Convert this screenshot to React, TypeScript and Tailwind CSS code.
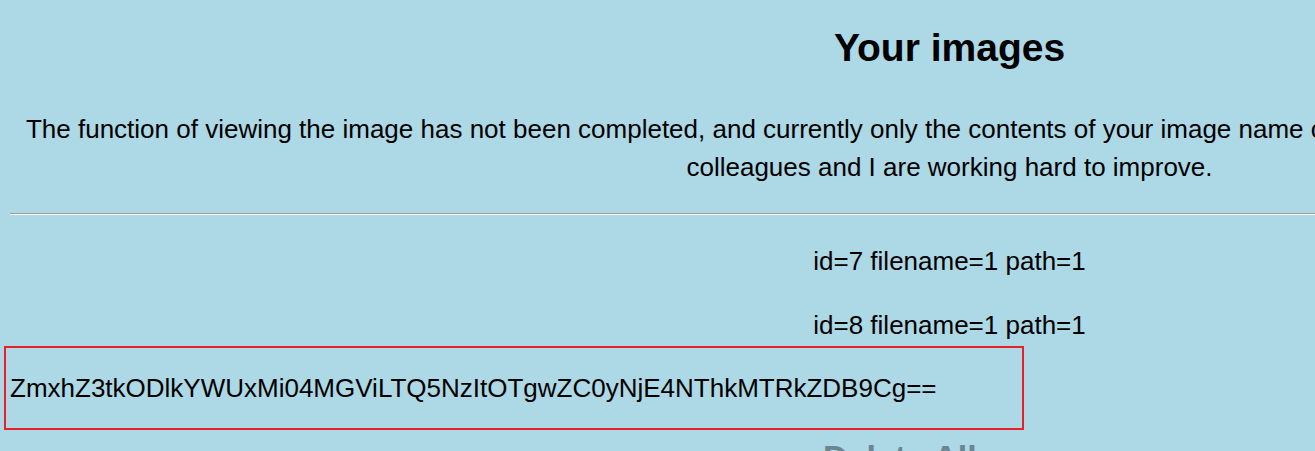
export default function App() {
  const images = [
    { id: 7, filename: "1", path: "1" },
    { id: 8, filename: "1", path: "1" },
  ]

  return (
    <div className="w-[1315px] h-[451px] overflow-hidden bg-[#add8e6] text-black font-['Liberation_Sans',Arial,sans-serif]">
      <div className="w-[1899px]">
        {/* Title */}
        <h1 className="mt-[26px] text-center text-[39px] leading-[44px] font-bold">Your images</h1>

        <p className="mt-[40px] text-center text-[26px] leading-[38.4px]">
          The function of viewing the image has not been completed, and currently only the contents of your image name can be shown on the page for the time being. My colleagues and I are working hard to improve.
        </p>

        <div className="mt-[26px] mx-[10px] border-t border-b border-t-[#9a9a9a] border-b-white" />

        {/* Image list */}
        <div className="mt-[27px] text-center text-[26px] leading-[38.4px]">
          {images.map((img, i) => (
            <p key={img.id} className={i > 0 ? "mt-[25.6px]" : ""}>
              id={img.id} filename={img.filename} path={img.path}
            </p>
          ))}
        </div>

        {/* Token box */}
        <div className="mt-[2px] ml-[4px] w-[1020px] h-[84px] flex items-center border-2 border-[#e8202a] px-[4px]">
          <p className="text-[26px] leading-[30px]">ZmxhZ3tkODlkYWUxMi04MGViLTQ5NzItOTgwZC0yNjE4NThkMTRkZDB9Cg==</p>
        </div>

        <div className="mt-[8px] pl-[823px]">
          <button className="text-[34px] leading-[39px] font-bold text-[#6b8690]">Delete All</button>
        </div>
      </div>
    </div>
  )
}
